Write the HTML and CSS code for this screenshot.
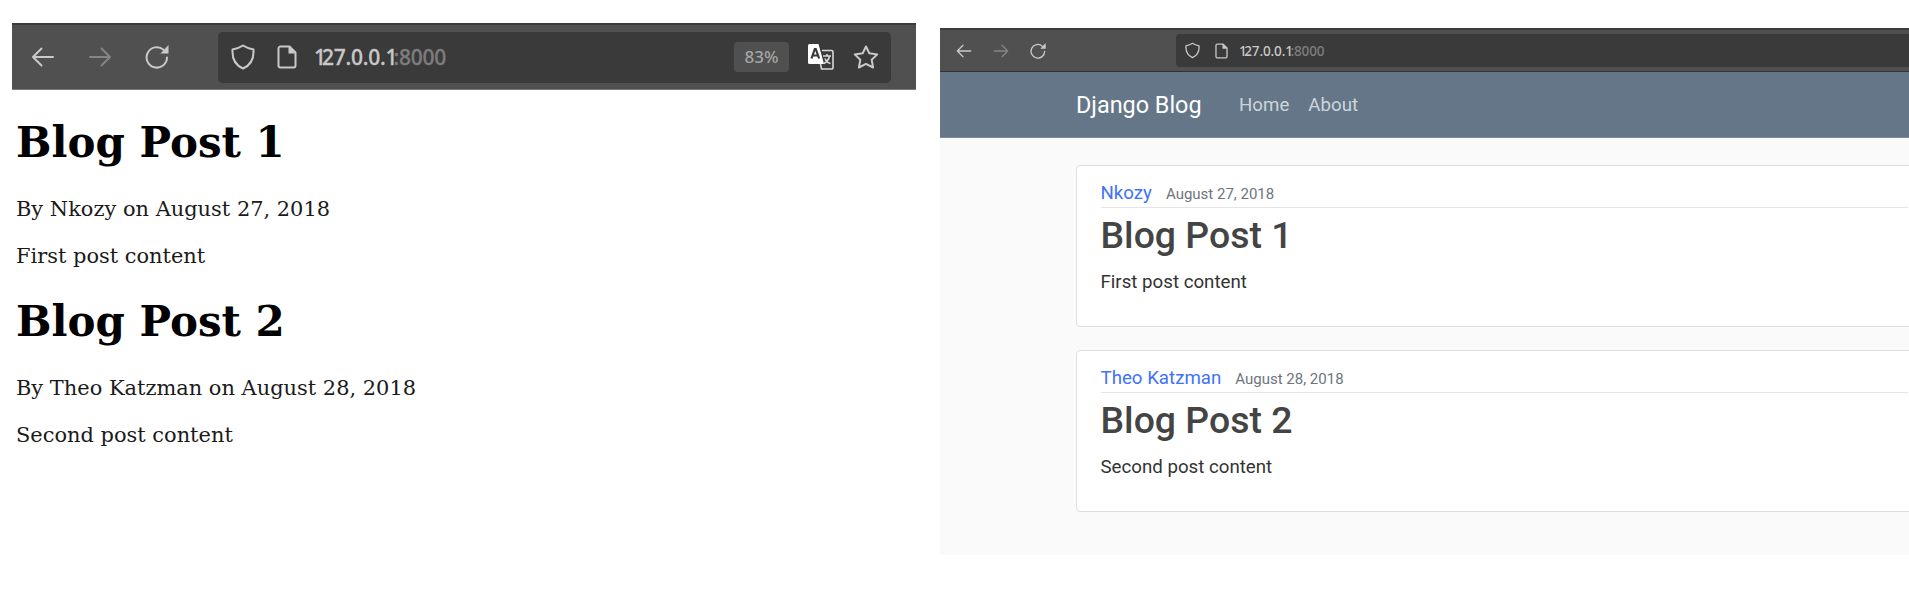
FILE: index.html
```
<!DOCTYPE html>
<html lang="en">
<head>
<meta charset="utf-8">
<title>Django Blog</title>
<link rel="stylesheet" href="styles.css">
</head>
<body>
<svg class="sprite" aria-hidden="true">
  <symbol id="arrow" viewBox="0 0 24 24"><path d="M22 12H2M10.500 3.500L2 12l8.500 8.500"/></symbol>
  <symbol id="reload" viewBox="0 0 24 24"><path d="M22 12.500A10.200 10.200 0 1 1 18.500 4.700"/><path class="solid" d="M23.500 0v8.500h-8z"/></symbol>
  <symbol id="shield" viewBox="0 0 24 26"><path d="M12 1.500C9 3.500 5 4.800 1.500 5.500C1 14 4 21 12 24.500C20 21 23 14 22.500 5.500C19 4.800 15 3.500 12 1.500z"/></symbol>
  <symbol id="page" viewBox="0 0 20 24"><path d="M12.500 1.500H3.500a2 2 0 0 0-2 2v17a2 2 0 0 0 2 2h13a2 2 0 0 0 2-2V7.500z"/><path class="solid" d="M11.500 1l7.500 7.500h-7.500z"/></symbol>
</svg>
<main class="compare">
  <section class="plain">
    <header class="browser browser-large">
      <div class="controls">
        <svg class="icon"><use href="#arrow"/></svg>
        <svg class="icon forward"><use href="#arrow"/></svg>
        <svg class="icon"><use href="#reload"/></svg>
      </div>
      <div class="address">
        <svg class="icon shield"><use href="#shield"/></svg>
        <svg class="icon page"><use href="#page"/></svg>
        <span class="url"><span class="one">1</span>27.0.0.<span class="one">1</span><span class="port">:8000</span></span>
        <span class="zoom">83%</span>
        <svg class="translate" viewBox="0 0 26 26"><path class="sheet-back" d="M14 6.500h9.500a1.500 1.500 0 0 1 1.500 1.500v15.500a1.500 1.500 0 0 1-1.500 1.500H13.500l-1-5"/><path class="sheet" d="M1.500 0h9l5.500 20H1.500A1.500 1.500 0 0 1 0 18.500v-17A1.500 1.500 0 0 1 1.500 0z"/><path class="letter" d="M3.500 14.500L6.800 5h1l3.300 9.500M4.800 11.500h5"/><path class="sheet-back" d="M15 12h8M19 10v2M21.500 12q-1 5-5.500 7.500M17 14.500q1.500 4 5.500 5"/></svg>
        <svg class="star" viewBox="0 0 26 24"><path d="M13 1.500l3.300 6.800 8 1.100-5.600 5.400 1.400 7.700-7.100-3.600-7.100 3.600 1.400-7.700L1.700 9.400l8-1.100z"/></svg>
      </div>
    </header>
    <article class="entry">
      <h1>Blog Post 1</h1>
      <p>By Nkozy on August 27, 2018</p>
      <p>First post content</p>
    </article>
    <article class="entry">
      <h1>Blog Post 2</h1>
      <p>By Theo Katzman on August 28, 2018</p>
      <p>Second post content</p>
    </article>
  </section>
  <section class="styled">
    <header class="browser browser-small">
      <div class="controls">
        <svg class="icon"><use href="#arrow"/></svg>
        <svg class="icon forward"><use href="#arrow"/></svg>
        <svg class="icon"><use href="#reload"/></svg>
      </div>
      <div class="address">
        <svg class="icon shield"><use href="#shield"/></svg>
        <svg class="icon page"><use href="#page"/></svg>
        <span class="url"><span class="one">1</span>27.0.0.<span class="one">1</span><span class="port">:8000</span></span>
      </div>
    </header>
    <nav class="navbar">
      <a class="brand">Django Blog</a>
      <a class="link">Home</a>
      <a class="link">About</a>
    </nav>
    <div class="posts">
      <article class="card">
        <div class="meta"><a class="author">Nkozy</a><small class="date">August 27, 2018</small></div>
        <h2>Blog Post 1</h2>
        <p>First post content</p>
      </article>
      <article class="card">
        <div class="meta"><a class="author">Theo Katzman</a><small class="date">August 28, 2018</small></div>
        <h2>Blog Post 2</h2>
        <p>Second post content</p>
      </article>
    </div>
  </section>
</main>
</body>
</html>
```

FILE: styles.css
```
* { box-sizing: border-box; }
body { margin: 0; background: #fff; overflow: hidden; }
h1, h2, p { margin: 0; }
.sprite { display: none; }
.compare { display: flex; height: 595px; }

.browser { display: flex; align-items: center; background: #505050; border-top: 2px solid #3c3c3c; }
.controls { display: flex; align-items: center; }
.icon, .star { fill: none; stroke: #c9c9c9; stroke-width: 2; stroke-linecap: round; stroke-linejoin: round; flex: none; }
.solid { fill: #c9c9c9; stroke: none; }
.forward { transform: scaleX(-1); stroke: #858585; }
.address { display: flex; align-items: center; background: #3a3a3a; font-family: "Noto Sans", sans-serif; color: #c8c8c8; }
.url { white-space: nowrap; font-weight: 500; letter-spacing: -0.012em; }
.one { letter-spacing: -0.19em; }
.port { color: #7d7d7d; }

.plain { width: 904px; margin: 23px 24px 0 12px; font-family: "DejaVu Serif", serif; color: #000; }
.browser-large { height: 67px; padding-left: 19px; border-bottom: 1px solid #777; }
.browser-large .controls { gap: 33px; width: 187px; }
.browser-large .controls .icon { width: 24px; height: 24px; }
.browser-large .address { width: 673px; height: 51px; border-radius: 5px; padding: 0 12px 0 13px; font-size: 21px; }
.browser-large .url { -webkit-text-stroke: 0.3px; }
.browser-large .shield { width: 24px; height: 26px; }
.browser-large .page { width: 20px; height: 24px; margin: 0 17px 0 22px; }
.zoom { width: 55px; height: 30px; margin-left: auto; border-radius: 4px; background: #505050; color: #a6a6a6; font-size: 17px; font-weight: 500; line-height: 30px; text-align: center; }
.translate { width: 26px; height: 26px; margin: 0 19px; flex: none; }
.sheet { fill: #fff; }
.sheet-back { fill: none; stroke: #d8d8d8; stroke-width: 1.6; }
.letter { fill: none; stroke: #3a3a3a; stroke-width: 2.2; }
.star { width: 26px; height: 24px; }

.entry { height: 179px; padding: 28px 0 0 4px; }
.entry h1 { font-size: 42px; line-height: 50px; margin-bottom: 18px; white-space: nowrap; }
.entry p { font-size: 20.930px; line-height: 47px; color: #1a1a1a; white-space: nowrap; }

.styled { flex: none; width: 969px; height: 527px; margin-top: 28px; background: #fafafa; font-family: Roboto, sans-serif; overflow: hidden; }
.browser-small { height: 44px; padding-left: 16px; border-bottom: 1px solid #333; }
.browser-small .controls { gap: 21px; width: 220px; }
.browser-small .controls .icon { width: 16px; height: 16px; }
.browser-small .address { flex: 1; height: 33px; border-radius: 4px 0 0 4px; padding-left: 9px; font-size: 13.600px; }
.browser-small .shield { width: 15px; height: 17px; }
.browser-small .page { width: 13px; height: 16px; margin: 0 11px 0 15px; }

.navbar { display: flex; align-items: center; height: 66px; padding-left: 136px; background: #657688; border-bottom: 1px solid #7b8999; }
.brand { width: 163px; font-size: 23.400px; color: #fff; }
.link { margin-right: 19px; font-size: 18.700px; color: #cbd5db; }
.posts { display: flex; flex-direction: column; gap: 23px; padding: 27px 0 0 136px; }
.card { width: 860px; height: 162px; padding: 15px 28px 0 23.500px; background: #fff; border: 1px solid #dfdfdf; border-radius: 4px; }
.meta { display: flex; align-items: baseline; width: 807px; height: 27px; border-bottom: 1px solid #e5e5e5; font-size: 18.700px; line-height: 24px; }
.author { color: #4073fa; margin-right: 14px; }
.date { font-size: 15px; color: #6c757d; }
.card h2 { font-size: 37.400px; line-height: 44px; font-weight: 500; color: #444; margin-top: 5px; }
.card p { font-size: 18.700px; line-height: 28px; color: #333; margin-top: 10.500px; }
```
